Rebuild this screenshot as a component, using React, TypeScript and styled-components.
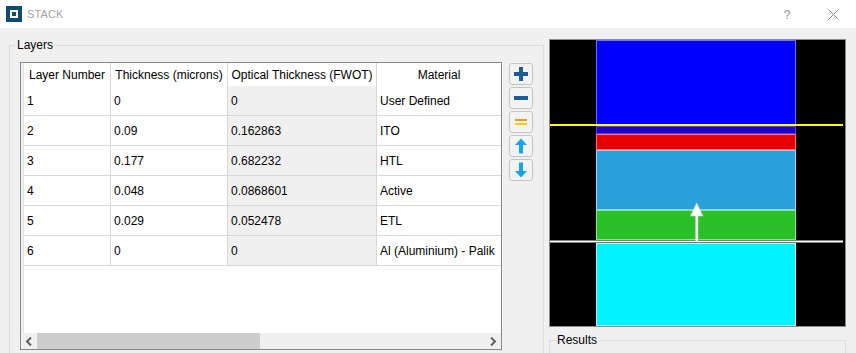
import styled, { createGlobalStyle } from 'styled-components';

type Layer = {
  num: number;
  thickness: string;
  optical: string;
  material: string;
};

const layers: Layer[] = [
  { num: 1, thickness: '0', optical: '0', material: 'User Defined' },
  { num: 2, thickness: '0.09', optical: '0.162863', material: 'ITO' },
  { num: 3, thickness: '0.177', optical: '0.682232', material: 'HTL' },
  { num: 4, thickness: '0.048', optical: '0.0868601', material: 'Active' },
  { num: 5, thickness: '0.029', optical: '0.052478', material: 'ETL' },
  { num: 6, thickness: '0', optical: '0', material: 'Al (Aluminium) - Palik' },
];

// stack drawing: y ranges inside the 294x286 canvas
const bands = [
  { y: 0, h: 85, fill: '#0000ff', stroke: '#7070ff' },
  { y: 86, h: 8, fill: '#1f00c0', stroke: '#5a3cff' },
  { y: 94, h: 16, fill: '#e80000', stroke: '#ff7070' },
  { y: 110, h: 60, fill: '#29a2dc', stroke: '#8fd0f4' },
  { y: 170, h: 30, fill: '#29c029', stroke: '#7af07a' },
  { y: 203, h: 83, fill: '#00f4ff', stroke: '#b0ffff' },
];

const App = () => {
  return (
    <>
      <Global />
      <Window>
        <TitleBar>
          <AppIcon>
            <AppIconHole>
              <AppIconDot />
            </AppIconHole>
          </AppIcon>
          <Title>STACK</Title>
          <TitleButton>?</TitleButton>
          <TitleButton>
            <svg width="11" height="11" viewBox="0 0 11 11">
              <path d="M0.5 0.5 L10.5 10.5 M10.5 0.5 L0.5 10.5" stroke="#8a8a8a" strokeWidth="1" fill="none" />
            </svg>
          </TitleButton>
        </TitleBar>

        <Content>
          <GroupBox $width={535} $height={330} $pad={10}>
            <Legend $shift={-5}>Layers</Legend>
            <LayersRow>
              <TableFrame>
                <Viewport>
                  <Gutter />
                  <Grid>
                    <HeadCell>Layer Number</HeadCell>
                    <HeadCell>Thickness (microns)</HeadCell>
                    <HeadCell>Optical Thickness (FWOT)</HeadCell>
                    <HeadCell $last>Material</HeadCell>
                    {layers.map((l) => (
                      <Row key={l.num}>
                        <Cell>{l.num}</Cell>
                        <Cell>{l.thickness}</Cell>
                        <Cell $readonly>{l.optical}</Cell>
                        <Cell $last>{l.material}</Cell>
                      </Row>
                    ))}
                  </Grid>
                </Viewport>
                <HScroll>
                  <ScrollArrow>
                    <svg width="8" height="9" viewBox="0 0 8 9">
                      <path d="M6 0.5 L2 4.5 L6 8.5" stroke="#606060" strokeWidth="2" fill="none" />
                    </svg>
                  </ScrollArrow>
                  <Thumb />
                  <Track />
                  <ScrollArrow>
                    <svg width="8" height="9" viewBox="0 0 8 9">
                      <path d="M2 0.5 L6 4.5 L2 8.5" stroke="#606060" strokeWidth="2" fill="none" />
                    </svg>
                  </ScrollArrow>
                </HScroll>
              </TableFrame>

              <ToolColumn>
                <ToolButton title="Add layer">
                  <svg width="16" height="16" viewBox="0 0 16 16">
                    <rect x="1" y="6" width="14" height="4" fill="#1a5d98" />
                    <rect x="6" y="1" width="4" height="14" fill="#1a5d98" />
                  </svg>
                </ToolButton>
                <ToolButton title="Remove layer">
                  <svg width="16" height="16" viewBox="0 0 16 16">
                    <rect x="1" y="6" width="14" height="4" fill="#1a5d98" />
                  </svg>
                </ToolButton>
                <ToolButton title="Set reference">
                  <svg width="16" height="16" viewBox="0 0 16 16">
                    <rect x="2" y="5" width="12" height="2" fill="#f59a1c" />
                    <rect x="2" y="9" width="12" height="2" fill="#ffcc00" />
                  </svg>
                </ToolButton>
                <ToolButton title="Move up">
                  <svg width="16" height="16" viewBox="0 0 16 16">
                    <path d="M8 0.5 L14 7 L10 7 L10 15.5 L6 15.5 L6 7 L2 7 Z" fill="#17a3ea" />
                  </svg>
                </ToolButton>
                <ToolButton title="Move down">
                  <svg width="16" height="16" viewBox="0 0 16 16">
                    <path d="M8 15.5 L14 9 L10 9 L10 0.5 L6 0.5 L6 9 L2 9 Z" fill="#17a3ea" />
                  </svg>
                </ToolButton>
              </ToolColumn>
            </LayersRow>
          </GroupBox>

          <SidePanel>
            <Canvas>
              <svg width="294" height="286" viewBox="0 0 294 286">
                {bands.map((b, i) => (
                  <rect
                    key={i}
                    x={46.5}
                    y={b.y + 0.5}
                    width={199}
                    height={b.h - 1}
                    fill={b.fill}
                    stroke={b.stroke}
                    strokeWidth={1}
                  />
                ))}
                <rect x="0" y="84" width="293" height="2" fill="#ffff00" />
                <rect x="0" y="200.5" width="293" height="2" fill="#ffffff" />
                <rect x="145.5" y="175" width="2.5" height="26" fill="#ffffff" stroke="#c8c8c8" strokeWidth="0.5" />
                <path d="M146.7 163 L153 176 L140.4 176 Z" fill="#ffffff" stroke="#d0d0d0" strokeWidth="0.6" />
              </svg>
            </Canvas>
            <GroupBox $width={297} $height={60} $pad={6}>
              <Legend $shift={-1}>Results</Legend>
            </GroupBox>
          </SidePanel>
        </Content>
      </Window>
    </>
  );
};

const Global = createGlobalStyle`
  html, body {
    margin: 0;
    padding: 0;
    background: #f0f0f0;
    overflow: hidden;
  }
  * {
    box-sizing: border-box;
  }
`;

const Window = styled.div`
  width: 856px;
  height: 353px;
  overflow: hidden;
  background: #f0f0f0;
  font-family: "Liberation Sans", Arial, sans-serif;
  font-size: 12px;
  color: #000;
`;

const TitleBar = styled.div`
  height: 28px;
  background: #fff;
  display: flex;
  align-items: center;
  padding-left: 6px;
`;

const AppIcon = styled.div`
  width: 16px;
  height: 16px;
  background: #0e4b6c;
  display: flex;
  align-items: center;
  justify-content: center;
`;

const AppIconHole = styled.div`
  width: 8px;
  height: 8px;
  background: #fff;
  display: flex;
  align-items: center;
  justify-content: center;
`;

const AppIconDot = styled.div`
  width: 4px;
  height: 4px;
  background: #0e4b6c;
`;

const Title = styled.div`
  margin-left: 5px;
  font-size: 11px;
  letter-spacing: 0.1px;
  color: #a3a3a3;
  flex: 1;
`;

const TitleButton = styled.div`
  width: 46px;
  height: 28px;
  display: flex;
  align-items: center;
  justify-content: center;
  font-size: 13px;
  color: #9a9a9a;
`;

const Content = styled.div`
  display: flex;
  align-items: flex-start;
  padding: 10px 0 0 9px;
`;

const GroupBox = styled.fieldset<{ $width: number; $height: number; $pad: number }>`
  margin: 0;
  width: ${(p) => p.$width}px;
  height: ${(p) => p.$height}px;
  min-inline-size: 0;
  border: 1px solid #dcdcdc;
  padding: 0 0 0 ${(p) => p.$pad}px;
  flex-shrink: 0;
`;

const Legend = styled.legend<{ $shift: number }>`
  margin-left: ${(p) => p.$shift}px;
  padding: 0 2px;
  line-height: 14px;
  font-size: 12px;
`;

const LayersRow = styled.div`
  display: flex;
  align-items: flex-start;
  margin-top: 10px;
`;

const TableFrame = styled.div`
  width: 482px;
  height: 288px;
  border: 1px solid #828790;
  display: flex;
  flex-direction: column;
  background: #fff;
`;

const Viewport = styled.div`
  flex: 1;
  display: flex;
  overflow: hidden;
`;

const Gutter = styled.div`
  width: 3px;
  background: #f0f0f0;
  border-right: 1px solid #e3e3e3;
`;

const Grid = styled.div`
  display: grid;
  grid-template-columns: 87px 117px 149px 124px;
  grid-auto-rows: 30px;
  grid-template-rows: 23px;
  align-content: start;
`;

const Row = styled.div`
  display: contents;
`;

const HeadCell = styled.div<{ $last?: boolean }>`
  display: flex;
  align-items: center;
  justify-content: center;
  white-space: nowrap;
  overflow: hidden;
  background: #fff;
  border-right: ${(p) => (p.$last ? 'none' : '1px solid #d8d8d8')};
`;

const Cell = styled.div<{ $readonly?: boolean; $last?: boolean }>`
  display: flex;
  align-items: center;
  padding: 0 0 0 3px;
  white-space: nowrap;
  overflow: hidden;
  background: ${(p) => (p.$readonly ? '#f0f0f0' : '#fff')};
  border-right: ${(p) => (p.$last ? 'none' : '1px solid #d8d8d8')};
  border-bottom: 1px solid #d8d8d8;
`;

const HScroll = styled.div`
  height: 16px;
  display: flex;
  background: #f0f0f0;
`;

const ScrollArrow = styled.div`
  width: 16px;
  height: 16px;
  display: flex;
  align-items: center;
  justify-content: center;
`;

const Thumb = styled.div`
  width: 223px;
  background: #cdcdcd;
`;

const Track = styled.div`
  flex: 1;
`;

const ToolColumn = styled.div`
  display: flex;
  flex-direction: column;
  gap: 2px;
  margin: 1px 0 0 7px;
`;

const ToolButton = styled.button`
  width: 24px;
  height: 22px;
  padding: 0;
  border: 1px solid #c4c4c4;
  border-radius: 3px;
  background: #f3f3f3;
  display: flex;
  align-items: center;
  justify-content: center;
`;

const SidePanel = styled.div`
  display: flex;
  flex-direction: column;
  gap: 6px;
  margin: 1px 0 0 5px;
`;

const Canvas = styled.div`
  width: 297px;
  height: 288px;
  border: 1px solid #8a8a8a;
  background: #000;
  display: flex;
  svg {
    display: block;
  }
`;

export default App;
